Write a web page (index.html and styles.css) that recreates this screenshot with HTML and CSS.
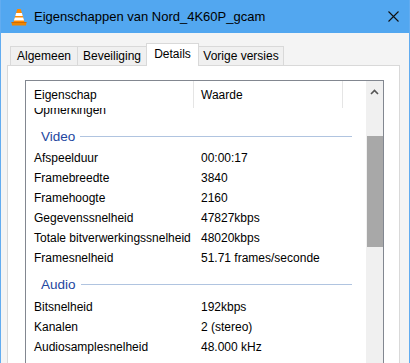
FILE: index.html
```html
<!DOCTYPE html>
<html>
<head>
<meta charset="utf-8">
<link rel="stylesheet" href="styles.css">
</head>
<body>
<div class="window">
  <div class="titlebar">
    <svg class="app-icon" width="16" height="18" viewBox="0 0 16 18">
      <path d="M0.5 14 H15.5 L15 17.5 H1 Z" fill="#ee8600"/>
      <path d="M0.5 14 H15.5 V14.8 H0.5 Z" fill="#c86400"/>
      <path d="M6.3 1 H9.7 L13.5 14 H2.5 Z" fill="#ff8a00"/>
      <path d="M5.13 5 H10.87 L11.75 8 H4.25 Z" fill="#ffffff"/>
      <path d="M3.82 9.5 H12.18 L13.06 12.5 H2.94 Z" fill="#ffffff"/>
    </svg>
    <span class="title">Eigenschappen van Nord_4K60P_gcam</span>
    <svg class="close" width="11" height="11" viewBox="0 0 11 11">
      <path d="M0.5 0.5 L10.5 10.5 M10.5 0.5 L0.5 10.5" stroke="#111" stroke-width="1.1" fill="none"/>
    </svg>
  </div>
  <div class="content">
    <div class="tabs">
      <div class="tab t1">Algemeen</div>
      <div class="tab t2">Beveiliging</div>
      <div class="tab t3 active">Details</div>
      <div class="tab t4">Vorige versies</div>
    </div>
    <div class="panel">
      <div class="listview">
        <div class="lv-main">
          <div class="lv-header">
            <div class="hcol c1">Eigenschap</div>
            <div class="hcol c2">Waarde</div>
          </div>
          <div class="lv-body">
            <div class="lv-rows">
              <div class="row"><span class="k">Opmerkingen</span><span class="v"></span></div>
              <div class="group"><span class="g-label">Video</span></div>
              <div class="row"><span class="k">Afspeelduur</span><span class="v">00:00:17</span></div>
              <div class="row"><span class="k">Framebreedte</span><span class="v">3840</span></div>
              <div class="row"><span class="k">Framehoogte</span><span class="v">2160</span></div>
              <div class="row"><span class="k">Gegevenssnelheid</span><span class="v">47827kbps</span></div>
              <div class="row"><span class="k">Totale bitverwerkingssnelheid</span><span class="v">48020kbps</span></div>
              <div class="row"><span class="k">Framesnelheid</span><span class="v">51.71 frames/seconde</span></div>
              <div class="group audio"><span class="g-label">Audio</span></div>
              <div class="row"><span class="k">Bitsnelheid</span><span class="v">192kbps</span></div>
              <div class="row"><span class="k">Kanalen</span><span class="v">2 (stereo)</span></div>
              <div class="row"><span class="k">Audiosamplesnelheid</span><span class="v">48.000 kHz</span></div>
            </div>
          </div>
        </div>
        <div class="scrollbar">
          <div class="sb-up">
            <svg width="9" height="6" viewBox="0 0 9 6">
              <path d="M1 5 L4.5 1.5 L8 5" stroke="#555" stroke-width="1.6" fill="none"/>
            </svg>
          </div>
          <div class="sb-thumb"></div>
        </div>
      </div>
    </div>
  </div>
</div>
</body>
</html>
```

FILE: styles.css
```css
html, body {
  margin: 0;
  padding: 0;
}

body {
  font-family: "Liberation Sans", Arial, sans-serif;
  font-size: 12px;
  color: #000;
  background: #f4f4f4;
}

.window {
  width: 410px;
  height: 363px;
  box-sizing: border-box;
  overflow: hidden;
  border-left: 1px solid #62acf0;
  border-right: 1px solid #62acf0;
  background: #f4f4f4;
  display: flex;
  flex-direction: column;
}

.titlebar {
  flex: none;
  height: 33px;
  background: #52a7f0;
  display: flex;
  align-items: center;
}

.app-icon {
  margin-left: 10px;
  flex: none;
}

.title {
  margin-left: 7px;
  font-size: 13px;
  color: #000;
}

.close {
  margin-left: auto;
  margin-right: 10px;
  flex: none;
}

.content {
  flex: 1;
  padding: 10px 9px 0 6px;
}

.tabs {
  display: flex;
  align-items: flex-end;
  height: 22px;
  padding-left: 3px;
}

.tab {
  box-sizing: border-box;
  height: 19px;
  line-height: 18px;
  border: 1px solid #d9d9d9;
  border-bottom: 0;
  margin-right: -1px;
  background: #f0f0f0;
  text-align: center;
  white-space: nowrap;
}

.t1 { width: 68px; }
.t2 { width: 70px; }
.t3 { width: 53px; }
.t4 { width: 86px; }

.tab.active {
  position: relative;
  z-index: 1;
  height: 23px;
  line-height: 20px;
  margin-bottom: -1px;
  background: #ffffff;
}

.panel {
  height: 400px;
  background: #ffffff;
  border: 1px solid #d9d9d9;
  padding: 14px 15px 0 17px;
}

.listview {
  height: 400px;
  border: 1px solid #828790;
  background: #ffffff;
  display: flex;
}

.lv-main {
  flex: 1;
  display: flex;
  flex-direction: column;
  min-width: 0;
}

.lv-header {
  flex: none;
  display: flex;
  height: 27px;
  position: relative;
  z-index: 1;
  background: #ffffff;
}

.hcol {
  box-sizing: border-box;
  height: 27px;
  line-height: 28px;
  border-right: 1px solid #e5e5e5;
  white-space: nowrap;
}

.c1 {
  width: 168px;
  padding-left: 8px;
}

.c2 {
  width: 149px;
  padding-left: 7px;
}

.lv-body {
  flex: 1;
  overflow: hidden;
}

.lv-rows {
  margin-top: -8px;
}

.row {
  display: grid;
  grid-template-columns: 175px 1fr;
  height: 20px;
  line-height: 20px;
  white-space: nowrap;
}

.row .k {
  padding-left: 8px;
}

.group {
  box-sizing: border-box;
  height: 28px;
  padding: 4px 14px 0 15px;
  display: flex;
  align-items: center;
  color: #2346a0;
  font-size: 13.5px;
}

.group.audio {
  height: 29px;
  padding-top: 3px;
}

.group::after {
  content: "";
  flex: 1;
  height: 1px;
  margin-left: 5px;
  background: #b0c4e0;
}

.scrollbar {
  flex: none;
  width: 17px;
  background: #f0f0f0;
  display: flex;
  flex-direction: column;
}

.sb-up {
  height: 22px;
  display: flex;
  align-items: center;
  justify-content: center;
}

.sb-thumb {
  margin-top: 33px;
  margin-left: 1px;
  height: 111px;
  background: #a8a8a8;
}
```
